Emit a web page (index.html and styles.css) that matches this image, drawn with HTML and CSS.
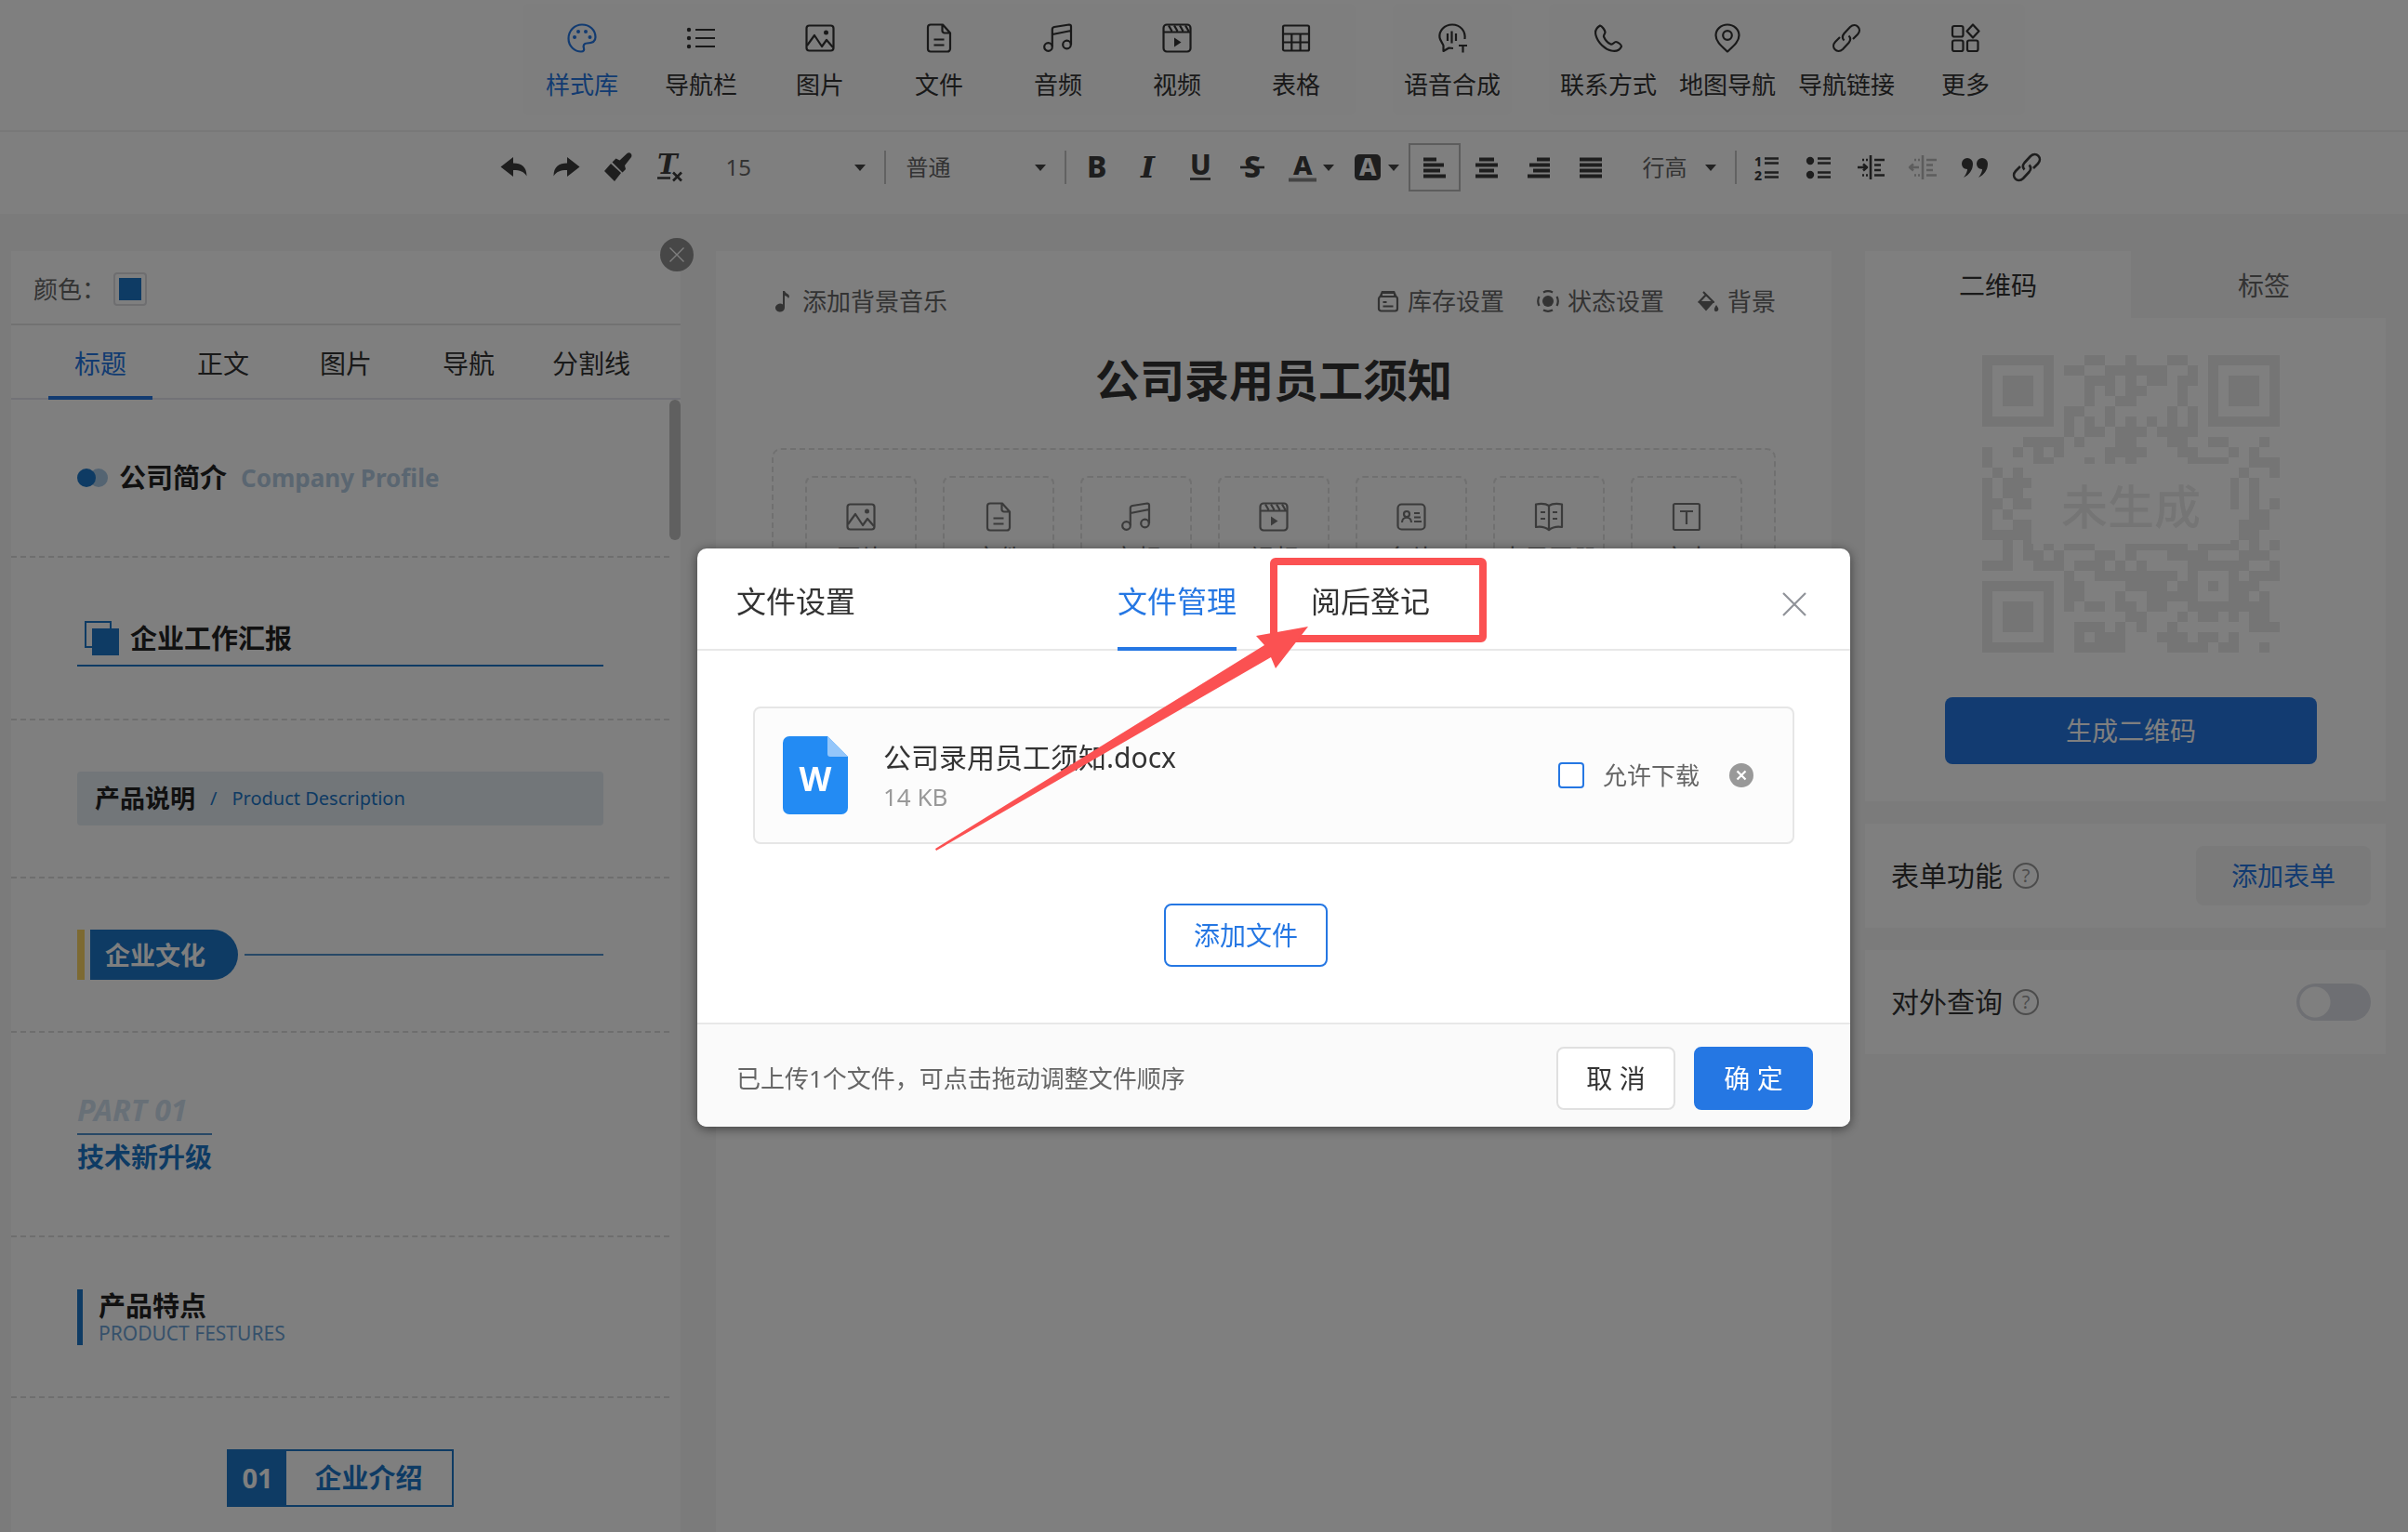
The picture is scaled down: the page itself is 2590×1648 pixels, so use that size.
FILE: index.html
```html
<!DOCTYPE html>
<html lang="zh-cn">

<head>
    <meta charset="UTF-8">
    <title>公司录用员工须知</title>
    <link rel="stylesheet" href="styles.css">
</head>

<body>
    <!-- 图标 -->
    <svg class="sprite" aria-hidden="true">
        <symbol id="i-palette" viewBox="0 0 32 32">
            <path d="M16 1.500C8 1.500 1.500 8 1.500 16.500S8.500 30.500 15 30.500c3 0 3.500-2 3-3.500-1-3 0-5.500 3.500-5.500 5 0 9-1 9-6.500C30.500 7 24 1.500 16 1.500z" />
            <g class="solid"><circle cx="8" cy="15" r="2" /><circle cx="12" cy="9" r="2" /><circle cx="20" cy="9" r="2" /><circle cx="24.500" cy="15" r="2" /></g>
        </symbol>
        <symbol id="i-list" viewBox="0 0 32 32">
            <path d="M10 7h21M10 16h21M10 25h21" />
            <g class="solid"><circle cx="3" cy="7" r="2.200" /><circle cx="3" cy="16" r="2.200" /><circle cx="3" cy="25" r="2.200" /></g>
        </symbol>
        <symbol id="i-image" viewBox="0 0 32 32">
            <rect x="1.500" y="2.500" width="29" height="27" rx="3" />
            <path d="M2 24l8-11 8 12 5-7 7 8" />
            <circle class="solid" cx="22.500" cy="10" r="2.500" />
        </symbol>
        <symbol id="i-file" viewBox="0 0 32 32">
            <path d="M7 1.500h13l8 9V27.500a3 3 0 0 1-3 3H7a3 3 0 0 1-3-3V4.500a3 3 0 0 1 3-3zM19.500 2v6a2.500 2.500 0 0 0 2.500 2.500h6M10.500 17.500h11M10.500 23.500h11" />
        </symbol>
        <symbol id="i-music" viewBox="0 0 32 32">
            <circle cx="5.500" cy="25.500" r="4.300" /><circle cx="25.500" cy="23" r="4.300" />
            <path d="M9.800 25V6.500Q9.800 4.500 12 4L28 1.500q2 0 2 2V23M10 12l20-4" />
        </symbol>
        <symbol id="i-video" viewBox="0 0 32 32">
            <rect x="1.500" y="1.500" width="29" height="29" rx="3.500" />
            <path d="M2 9.500h28M7 2.500l3.500 6M13 2.500l3.500 6M19 2.500l3.500 6M25 2.500l3.500 6" />
            <path class="solid" d="M13 15.500l7.500 5-7.500 5z" />
        </symbol>
        <symbol id="i-table" viewBox="0 0 32 32">
            <rect x="2" y="2.500" width="28" height="27" rx="1.500" />
            <path d="M2 11.500h28M2 20.500h28M11.300 11.500v18M20.600 11.500v18" />
        </symbol>
        <symbol id="i-voice" viewBox="0 0 32 32">
            <path d="M29.500 17c1-9-5-15.500-13.500-15.500S1.500 8 2.500 15.500C3 19 6 22 6.500 24v6l6-3.500 4.500.5M11 11v8M15.500 8.500v13M20 11v8M23 24h9M27.500 24v7.500" />
        </symbol>
        <symbol id="i-phone" viewBox="0 0 32 32">
            <path d="M7 2.500C3 5 1 8 2.500 13c2 8 10 15 16.500 16.500 5 1.200 9-.5 11-4.500 0-2-4-5-6-5s-3 3.500-5.500 2.500C15 21 12.500 18 11 14.500c-.5-2 1.500-3 1.500-5C12 7 9 3 7 2.500z" />
        </symbol>
        <symbol id="i-pin" viewBox="0 0 32 32">
            <path d="M16 30.500C9 24 3.500 19.500 3.500 13a12.500 11.500 0 0 1 25 0C28.500 19.500 23 24 16 30.500z" />
            <circle cx="16" cy="13" r="4.800" />
        </symbol>
        <symbol id="i-link" viewBox="0 0 32 32">
            <path d="M13.500 18.500c-2-2-2-5 0-7.500L20 4c6-5.500 13.500 2 8 8l-5 5M18.500 13.500c2 2 2 5 0 7.500L12 28c-6 5.500-13.500-2-8-8l5-5" />
        </symbol>
        <symbol id="i-more" viewBox="0 0 32 32">
            <rect x="2" y="3" width="11.500" height="11.500" rx="2" /><rect x="2" y="18.500" width="11.500" height="11.500" rx="2" />
            <rect x="18" y="18.500" width="11.500" height="11.500" rx="2" /><path d="M24 1.500l6.500 7-6.500 7-6.500-7z" />
        </symbol>
        <symbol id="i-card" viewBox="0 0 32 32">
            <rect x="1.500" y="2.500" width="29" height="27" rx="4" /><circle cx="11" cy="13" r="3" />
            <path d="M6 22c0-7 10-7 10 0M19 12h6M19 16.500h7M19 21h8" />
        </symbol>
        <symbol id="i-book" viewBox="0 0 32 32">
            <path d="M2 2.500c6-1 11-.5 14 1.500 3-2 8-2.500 14-1.500V27c-6-1-10 0-14 3-4-3-8-4-14-3zM16 4v26M7 11h5M7 18h5M20 11h5M20 18h5" />
        </symbol>
        <symbol id="i-text" viewBox="0 0 32 32">
            <rect x="2" y="2" width="28" height="28" rx="1.500" /><path d="M9 10h14M16 10v14" />
        </symbol>
        <symbol id="i-close" viewBox="0 0 32 32"><path d="M4 4l24 24M28 4L4 28" /></symbol>
        <symbol id="i-undo" viewBox="0 0 32 32">
            <path class="solid" d="M1.500 15.500L15 5v6.500c9 0 14.500 4 14.500 14-3-5-7-6.500-14.500-6.500V26z" />
        </symbol>
        <symbol id="i-brush" viewBox="0 0 32 32">
            <path class="solid" d="M1 20l7-8 11 10-7 9zM9.500 10.500l4-4 4 2 8-7.500c3-2 6 1 4.500 4l-7 9 1 4-3.500 3.500z" />
        </symbol>
        <symbol id="i-indent" viewBox="0 0 32 32">
            <path d="M16 3v26M20 8h11M20 13.500h7M20 19h7M20 24.500h11" /><path d="M2 16h9M8 12.500l4 3.500-4 3.500" />
            <path stroke-dasharray="2 2" d="M7 8h7M7 24.500h7" />
        </symbol>
        <symbol id="i-outdent" viewBox="0 0 32 32">
            <path d="M16 3v26M20 8h11M20 13.500h7M20 19h7M20 24.500h11" /><path d="M3 16h9M6 12.500L2 16l4 3.500" />
            <path stroke-dasharray="2 2" d="M7 8h7M7 24.500h7" />
        </symbol>
        <symbol id="i-quote" viewBox="0 0 32 32">
            <path class="solid" d="M2 12a6 6 0 0 1 12 0c0 7-4 12-10 15 3-4 4-7 4-9-4 0-6-3-6-6zM18 12a6 6 0 0 1 12 0c0 7-4 12-10 15 3-4 4-7 4-9-4 0-6-3-6-6z" />
        </symbol>
        <symbol id="i-note" viewBox="0 0 24 24">
            <path class="solid" d="M12 1h2c1 3 5 3 5 6l-1 2c-1-2-2-2.500-4-3v13a5 4.500 0 1 1-2-3.500z" />
        </symbol>
        <symbol id="i-stock" viewBox="0 0 24 24">
            <rect x="2" y="7" width="20" height="15.500" rx="2.500" /><path class="solid" fill-rule="evenodd" d="M5 1h14l3 7H2zM6 4v2.500h12V4z" /><path d="M6.500 13h4M6.500 17.500h11" />
        </symbol>
        <symbol id="i-state" viewBox="0 0 24 24">
            <path d="M7 2.500a11 11 0 0 1 10 0M7 21.500a11 11 0 0 0 10 0M2.500 7a11 11 0 0 0 0 10M21.500 7a11 11 0 0 1 0 10" /><circle class="solid" cx="12" cy="12" r="6" />
        </symbol>
        <symbol id="i-fill" viewBox="0 0 24 24">
            <path d="M7 2l3 3M10 5L2.500 13h15.500z" /><path class="solid" d="M1 12.500h18l-9 10zM21 16c2 3 3 4 2 6-1 1.500-3.500 1.500-4 0s0-3 2-6z" />
        </symbol>
    </svg>

    <header class="topbar">
        <nav class="group">
            <a class="tool on" href="#"><svg class="icon"><use href="#i-palette" /></svg>样式库</a>
            <a class="tool" href="#"><svg class="icon"><use href="#i-list" /></svg>导航栏</a>
            <a class="tool" href="#"><svg class="icon"><use href="#i-image" /></svg>图片</a>
            <a class="tool" href="#"><svg class="icon"><use href="#i-file" /></svg>文件</a>
            <a class="tool" href="#"><svg class="icon"><use href="#i-music" /></svg>音频</a>
            <a class="tool" href="#"><svg class="icon"><use href="#i-video" /></svg>视频</a>
            <a class="tool" href="#"><svg class="icon"><use href="#i-table" /></svg>表格</a>
        </nav>
        <nav class="group">
            <a class="tool" href="#"><svg class="icon"><use href="#i-voice" /></svg>语音合成</a>
        </nav>
        <nav class="group">
            <a class="tool" href="#"><svg class="icon"><use href="#i-phone" /></svg>联系方式</a>
            <a class="tool" href="#"><svg class="icon"><use href="#i-pin" /></svg>地图导航</a>
            <a class="tool" href="#"><svg class="icon"><use href="#i-link" /></svg>导航链接</a>
            <a class="tool" href="#"><svg class="icon"><use href="#i-more" /></svg>更多</a>
        </nav>
    </header>

    <div class="editbar">
        <button class="btn" aria-label="撤销"><svg class="icon"><use href="#i-undo" /></svg></button>
        <button class="btn" aria-label="重做"><svg class="icon flip"><use href="#i-undo" /></svg></button>
        <button class="btn" aria-label="格式刷"><svg class="icon"><use href="#i-brush" /></svg></button>
        <button class="btn" aria-label="清除格式"><svg class="icon" viewBox="0 0 32 32"><text class="serif" x="2" y="23" font-size="29">T</text><path d="M2 27.500h14M19 21.500l9 9M28 21.500l-9 9" /></svg></button>
        <div class="pick size"><select aria-label="字号"><option>15</option></select></div>
        <i class="sep"></i>
        <div class="pick weight"><select aria-label="字重"><option>普通</option></select></div>
        <i class="sep after"></i>
        <button class="btn" aria-label="加粗"><svg class="icon" viewBox="0 0 32 32"><text class="bold" x="6" y="27" font-size="32">B</text></svg></button>
        <button class="btn" aria-label="斜体"><svg class="icon" viewBox="0 0 32 32"><text class="serif" x="8" y="27" font-size="32">I</text></svg></button>
        <button class="btn" aria-label="下划线"><svg class="icon" viewBox="0 0 32 32"><text class="bold" x="5" y="24" font-size="30">U</text><path d="M5 28.500h22" /></svg></button>
        <button class="btn" aria-label="删除线"><svg class="icon" viewBox="0 0 32 32"><text class="bold" x="7" y="27" font-size="32">S</text><path d="M3 16h26" /></svg></button>
        <button class="btn color" aria-label="文字颜色"><svg class="icon" viewBox="0 0 32 32"><text class="bold" x="6" y="24" font-size="29">A</text><path class="ink" d="M1 29.500h30" /></svg></button>
        <button class="btn color" aria-label="背景颜色"><svg class="icon" viewBox="0 0 32 32"><rect class="solid" x="2" y="2" width="28" height="28" rx="5" /><text class="bold paper-ink" x="7" y="25" font-size="26">A</text></svg></button>
        <button class="btn picked" aria-label="左对齐"><svg class="icon bars" viewBox="0 0 32 32"><path d="M4 7.500h14M4 13.500h22M4 19.500h18M4 25.500h24" /></svg></button>
        <button class="btn" aria-label="居中"><svg class="icon bars" viewBox="0 0 32 32"><path d="M8 7.500h16M4 13.500h24M8 19.500h16M4 25.500h24" /></svg></button>
        <button class="btn" aria-label="右对齐"><svg class="icon bars" viewBox="0 0 32 32"><path d="M14 7.500h14M6 13.500h22M10 19.500h18M4 25.500h24" /></svg></button>
        <button class="btn" aria-label="两端对齐"><svg class="icon bars" viewBox="0 0 32 32"><path d="M4 7.500h24M4 13.500h24M4 19.500h24M4 25.500h24" /></svg></button>
        <div class="pick line"><select aria-label="行高"><option>行高</option></select></div>
        <i class="sep after"></i>
        <button class="btn" aria-label="有序列表"><svg class="icon" viewBox="0 0 32 32"><text class="bold" x="3" y="15" font-size="14">1</text><text class="bold" x="3" y="30" font-size="14">2</text><path d="M14 6.500h15M14 11.500h15M14 21.500h15M14 26.500h15" /></svg></button>
        <button class="btn" aria-label="无序列表"><svg class="icon" viewBox="0 0 32 32"><g class="solid"><circle cx="7" cy="9" r="4.200" /><circle cx="7" cy="24" r="4.200" /></g><path d="M15 6.500h14M15 11.500h14M15 21.500h14M15 26.500h14" /></svg></button>
        <button class="btn" aria-label="增加缩进"><svg class="icon"><use href="#i-indent" /></svg></button>
        <button class="btn" aria-label="减少缩进" disabled><svg class="icon"><use href="#i-outdent" /></svg></button>
        <button class="btn" aria-label="引用"><svg class="icon"><use href="#i-quote" /></svg></button>
        <button class="btn" aria-label="链接"><svg class="icon"><use href="#i-link" /></svg></button>
    </div>

    <main class="work">
        <!-- 左侧样式库 -->
        <aside class="styles">
            <button class="fold" aria-label="收起"><svg class="icon"><use href="#i-close" /></svg></button>
            <div class="pal">颜色&#xFF1A;<button class="swatch" aria-label="选择颜色"></button></div>
            <nav class="kinds">
                <a class="on" href="#">标题</a>
                <a href="#">正文</a>
                <a href="#">图片</a>
                <a href="#">导航</a>
                <a href="#">分割线</a>
            </nav>
            <div class="scroll">
                <ul class="list">
                    <li class="s1"><i class="dot"></i><i class="dot pale"></i><b>公司简介</b><b class="en">Company Profile</b></li>
                    <li class="s2">
                        <div><svg class="squares" viewBox="0 0 37 37"><rect x="1" y="1" width="27" height="27" /><rect class="front" x="8" y="8" width="29" height="29" /></svg><b>企业工作汇报</b></div>
                    </li>
                    <li class="s3">
                        <div><b>产品说明</b><span>/</span><span>Product Description</span></div>
                    </li>
                    <li class="s4"><i class="gold"></i><b>企业文化</b><i class="rule"></i></li>
                    <li class="s5">
                        <div><em>PART 01</em><b>技术新升级</b></div>
                    </li>
                    <li class="s6">
                        <div><b>产品特点</b><span>PRODUCT FESTURES</span></div>
                    </li>
                    <li class="s7">
                        <div><b class="num">01</b><b>企业介绍</b></div>
                    </li>
                </ul>
                <i class="thumb"></i>
            </div>
        </aside>

        <!-- 编辑区 -->
        <section class="paper">
            <div class="acts">
                <a class="music" href="#"><svg class="icon"><use href="#i-note" /></svg>添加背景音乐</a>
                <a href="#"><svg class="icon"><use href="#i-stock" /></svg>库存设置</a>
                <a href="#"><svg class="icon"><use href="#i-state" /></svg>状态设置</a>
                <a href="#"><svg class="icon"><use href="#i-fill" /></svg>背景</a>
            </div>
            <h1>公司录用员工须知</h1>
            <div class="drop">
                <button><svg class="icon"><use href="#i-image" /></svg>图片</button>
                <button><svg class="icon"><use href="#i-file" /></svg>文件</button>
                <button><svg class="icon"><use href="#i-music" /></svg>音频</button>
                <button><svg class="icon"><use href="#i-video" /></svg>视频</button>
                <button><svg class="icon"><use href="#i-card" /></svg>名片</button>
                <button><svg class="icon"><use href="#i-book" /></svg>电子画册</button>
                <button><svg class="icon"><use href="#i-text" /></svg>文本</button>
            </div>
        </section>

        <!-- 右侧设置 -->
        <aside class="side">
            <div class="qrbox">
                <nav class="qrtabs"><a class="on" href="#">二维码</a><a href="#">标签</a></nav>
                <div class="qr">
                    <svg viewBox="0 0 29 29" shape-rendering="crispEdges">
                        <path d="M.5 .5h6v6h-6zM22.500 .5h6v6h-6zM.5 22.500h6v6h-6z" />
                        <path d="M2 3.500h3M24 3.500h3M2 25.500h3" stroke-width="3" />
                        <path d="M10 .5h2M14 .5h1M18 .5h2M8 1.500h2M12 1.500h6M20 1.500h1M10 2.500h3M14 2.500h1M16 2.500h2M19 2.500h2M10 3.500h1M12 3.500h1M14 3.500h2M19 3.500h1M10 4.500h1M13 4.500h2M19 4.500h1M8 5.500h2M12 5.500h1M18 5.500h1M20 5.500h1M8 6.500h1M10 6.500h1M12 6.500h1M14 6.500h1M16 6.500h1M18 6.500h1M20 6.500h1M8 7.500h1M10 7.500h2M13 7.500h3M17 7.500h4" />
                        <path d="M4 8.500h4M9 8.500h1M13 8.500h2M18 8.500h2M22 8.500h2M27 8.500h1M0 9.500h1M3 9.500h1M5 9.500h1M7 9.500h1M12 9.500h4M19 9.500h2M24 9.500h1M26 9.500h1M0 10.500h1M5 10.500h2M10 10.500h1M12 10.500h1M14 10.500h1M20 10.500h4M26 10.500h3M1 11.500h1M3 11.500h1M25 11.500h1M28 11.500h1M0 12.500h1M2 12.500h3M24 12.500h1M26 12.500h1M0 13.500h1M2 13.500h2M24 13.500h1M26 13.500h1M0 14.500h2M3 14.500h2M24 14.500h1M26 14.500h1M28 14.500h1M0 15.500h1M2 15.500h1M26 15.500h2M0 16.500h1M3 16.500h2M25 16.500h3M0 17.500h5M25 17.500h2" />
                        <path d="M2 18.500h1M4 18.500h1M6 18.500h1M8 18.500h3M14 18.500h6M21 18.500h4M26 18.500h1M28 18.500h1M2 19.500h1M4 19.500h2M7 19.500h1M11 19.500h2M14 19.500h1M18 19.500h4M25 19.500h3M0 20.500h3M5 20.500h3M9 20.500h3M13 20.500h1M15 20.500h1M20 20.500h6M28 20.500h1M8 21.500h1M11 21.500h8M20 21.500h1M24 21.500h1M26 21.500h3M8 22.500h2M14 22.500h4M19 22.500h2M22 22.500h1M24 22.500h3M8 23.500h2M13 23.500h1M16 23.500h5M24 23.500h2M27 23.500h1M8 24.500h1M10 24.500h2M13 24.500h2M16 24.500h2M20 24.500h8M14 25.500h2M19 25.500h1M21 25.500h2M24 25.500h1M26 25.500h2M9 26.500h3M13 26.500h1M15 26.500h1M18 26.500h1M26 26.500h3M9 27.500h1M11 27.500h3M17 27.500h3M21 27.500h2M24 27.500h1M9 28.500h5M18 28.500h4M23 28.500h2M27 28.500h1" />
                        <rect x="4.830" y="10.600" width="19.340" height="7.800" />
                    </svg>
                    <span>未生成</span>
                </div>
                <button class="make">生成二维码</button>
            </div>
            <div class="row">表单功能<i class="help">?</i><button class="add">添加表单</button></div>
            <div class="row"><label for="query">对外查询</label><i class="help">?</i><input class="switch" type="checkbox" id="query"></div>
        </aside>
    </main>

    <div class="mask">
        <div class="modal" role="dialog" aria-labelledby="mt">
            <header>
                <h2 id="mt">文件设置</h2>
                <nav><a class="on" href="#">文件管理</a><a href="#">阅后登记</a></nav>
                <button class="x" aria-label="关闭"><svg class="icon"><use href="#i-close" /></svg></button>
            </header>
            <div class="body">
                <div class="file">
                    <svg class="doc" viewBox="0 0 70 84">
                        <path fill="#238bf3" d="M7 0h41l22 22v55a7 7 0 0 1-7 7H7a7 7 0 0 1-7-7V7a7 7 0 0 1 7-7z" />
                        <path fill="#94c6fa" d="M48 0l22 22H51a3 3 0 0 1-3-3z" />
                        <text x="35" y="59" text-anchor="middle">W</text>
                    </svg>
                    <div class="name">公司录用员工须知.docx<small>14 KB</small></div>
                    <label class="allow"><input type="checkbox">允许下载</label>
                    <button class="del" aria-label="删除"><svg class="icon"><use href="#i-close" /></svg></button>
                </div>
                <button class="more">添加文件</button>
            </div>
            <footer>
                <p>已上传1个文件&#xFF0C;可点击拖动调整文件顺序</p>
                <button>取 消</button>
                <button class="ok">确 定</button>
            </footer>
            <!-- 标注:红框和箭头 -->
            <svg class="mark" viewBox="0 0 600 320">
                <rect x="368" y="4" width="225" height="83" rx="2" />
                <path d="M4 313L358 94l-9-10 56-10-35 45-5-12L5 315z" />
            </svg>
        </div>
    </div>
</body>

</html>
```

FILE: styles.css
```css
* {
    box-sizing: border-box;
}

body {
    margin: 0;
    height: 100vh;
    overflow: hidden;
    display: flex;
    flex-direction: column;
    background: #f6f6f6;
    color: #333;
    font: 26px/36px "Noto Sans", "Noto Sans CJK SC", sans-serif;
}

a {
    color: inherit;
    text-decoration: none;
}

button,
select {
    margin: 0;
    padding: 0;
    border: 0;
    background: none;
    color: inherit;
    font: inherit;
}

i {
    font-style: normal;
}

.sprite {
    display: none;
}

.icon {
    width: 32px;
    height: 32px;
    flex: none;
    overflow: visible;
    fill: none;
    stroke: currentColor;
    stroke-width: 2.2;
    stroke-linejoin: round;
}

.icon text,
.solid {
    fill: currentColor;
    stroke: none;
}

/* 顶部 */
.topbar {
    display: flex;
    justify-content: center;
    gap: 40px;
    padding: 4px 0 16px 150px;
    background: #fff;
    border-bottom: 2px solid #f0f0f0;
}

.group {
    display: flex;
    background: #fcfcfc;
    border-radius: 6px;
}

.tool {
    width: 128px;
    height: 120px;
    padding-top: 21px;
    display: flex;
    flex-direction: column;
    align-items: center;
    gap: 16px;
}

.on {
    color: #2577e3;
}

/* 编辑工具条 */
.editbar {
    height: 88px;
    padding: 0 8px 12px 150px;
    display: flex;
    flex: none;
    align-items: center;
    justify-content: center;
    background: #fff;
    font-size: 24px;
}

.btn {
    width: 56px;
    height: 52px;
    display: flex;
    align-items: center;
    justify-content: center;
    color: #3c3c3c;
}

.btn .icon {
    stroke-width: 2.6;
}

.btn:disabled {
    color: #bbb;
}

.btn .bars {
    stroke-width: 4;
}

.btn.picked {
    border: 2px solid #bbb;
}

.flip {
    transform: scaleX(-1);
}

.color {
    width: 70px;
    gap: 6px;
}

.color::after,
.pick::after {
    content: "";
    border: 6px solid transparent;
    border-top: 7px solid #444;
    border-bottom: 0;
}

.bold {
    font-weight: 800;
}

.serif {
    font-family: "DejaVu Serif", serif;
    font-weight: bold;
    font-style: italic;
}

.icon .ink {
    stroke: #888;
    stroke-width: 4;
}

.icon .paper-ink {
    fill: #fff;
}

.pick {
    display: flex;
    align-items: center;
    padding-right: 20px;
    color: #666;
}

.pick select {
    flex: 1;
    min-width: 0;
    appearance: none;
}

.size {
    width: 202px;
    padding-left: 32px;
}

.weight {
    width: 192px;
    padding-left: 22px;
}

.line {
    width: 127px;
    padding-left: 28px;
}

.sep {
    width: 2px;
    height: 36px;
    background: #c4c4c4;
}

.sep.after {
    margin-right: 4px;
}

/* 三栏 */
.work {
    flex: 1;
    min-height: 0;
    display: grid;
    grid-template-columns: 720px 1fr 560px;
    padding: 40px 24px 0 12px;
}

.styles {
    position: relative;
    min-height: 0;
    display: flex;
    flex-direction: column;
    background: #fff;
}

.fold {
    position: absolute;
    top: -14px;
    right: -14px;
    width: 36px;
    height: 36px;
    display: grid;
    place-items: center;
    border-radius: 50%;
    background: #8e8e8e;
    color: #fff;
}

.fold .icon {
    width: 20px;
    height: 20px;
}

.pal {
    height: 80px;
    padding: 4px 0 0 24px;
    display: flex;
    flex: none;
    align-items: center;
    gap: 8px;
    color: #666;
    border-bottom: 2px solid #e4e4e4;
}

.swatch {
    width: 36px;
    height: 36px;
    padding: 4px;
    border: 2px solid #dcdce0;
    border-radius: 4px;
    background: #1d77c8 content-box;
}

.kinds {
    height: 80px;
    padding-left: 40px;
    display: flex;
    flex: none;
    gap: 20px;
    border-bottom: 2px solid #e4e4ee;
    font-size: 28px;
    line-height: 82px;
}

.kinds a {
    width: 112px;
    height: 80px;
    text-align: center;
}

.kinds .on {
    border-bottom: 4px solid #2577e3;
}

.scroll {
    display: flex;
    min-height: 0;
}

.thumb {
    width: 12px;
    height: 151px;
    border-radius: 6px;
    background: #c0c0c0;
}

.list {
    flex: 1;
    margin: 0;
    padding: 0;
    list-style: none;
    font-size: 29px;
    line-height: 40px;
}

.list li {
    height: 170px;
    padding: 0 71px;
    display: flex;
    align-items: center;
    border-bottom: 2px dashed #ddd;
}

.list b {
    color: #222;
}

.list .s2 {
    height: 175px;
}

.list .s4 {
    height: 166px;
}

.list .s5 {
    height: 220px;
}

.list .s6 {
    height: 173px;
}

.list .s7 {
    height: 174px;
    justify-content: center;
}

.dot {
    width: 20px;
    height: 20px;
    border-radius: 50%;
    background: #1d77c8;
    z-index: 1;
}

.dot.pale {
    margin: 0 12px 0 -7px;
    background: #a9c8e4;
    z-index: 0;
}

.list .en {
    margin-left: 15px;
    color: #b4cce2;
    font-size: 26px;
}

.s2 div {
    flex: 1;
    padding: 10px 0 8px 8px;
    display: flex;
    align-items: center;
    gap: 12px;
    border-bottom: 2px solid #1d77c8;
}

.squares {
    width: 37px;
    height: 37px;
    fill: none;
    stroke: #1d77c8;
    stroke-width: 2;
}

.front {
    fill: #1d77c8;
    stroke: none;
}

.s3 div {
    flex: 1;
    height: 58px;
    padding-left: 19px;
    display: flex;
    align-items: center;
    gap: 16px;
    border-radius: 4px;
    background: #e4ecf3;
    color: #1d77c8;
    font-size: 20px;
}

.s3 b,
.s4 b {
    font-size: 27px;
}

.gold {
    width: 8px;
    height: 54px;
    margin-right: 6px;
    background: #fbd565;
}

.list .s4 b {
    height: 54px;
    padding: 0 35px 0 16px;
    border-radius: 0 27px 27px 0;
    background: #1d77c8;
    color: #fff;
    line-height: 56px;
}

.rule {
    flex: 1;
    height: 2px;
    margin-left: 7px;
    background: #5191cd;
}

.s5 div,
.s6 div {
    display: flex;
    flex-direction: column;
}

.s5 div {
    padding-bottom: 6px;
}

.s5 em {
    border-bottom: 2px solid #5191cd;
    color: #d0e0ef;
    font-size: 32px;
    font-weight: bold;
    line-height: 50px;
}

.list .s5 b {
    margin-top: 4px;
    color: #1d77c8;
}

.s6 div {
    height: 60px;
    padding-left: 17px;
    border-left: 6px solid #1d77c8;
}

.s6 b {
    line-height: 36px;
}

.s6 span {
    color: #6da3d6;
    font-size: 21px;
    line-height: 22px;
}

.s7 div {
    display: flex;
    border: 2px solid #1d77c8;
    line-height: 58px;
}

.list .s7 b {
    padding: 0 31px;
    color: #1d77c8;
}

.list .s7 .num {
    padding: 0 14px;
    background: #1d77c8;
    color: #fff;
}

/* 编辑区 */
.paper {
    margin: 0 36px 0 38px;
    padding: 36px 60px;
    background: #fff;
}

.acts {
    display: flex;
    gap: 35px;
    color: #666;
}

.acts a {
    display: flex;
    align-items: center;
    gap: 9px;
}

.acts .icon {
    width: 24px;
    height: 24px;
}

.acts .music {
    margin-right: auto;
}

.paper h1 {
    margin: 22px 0 28px;
    font-size: 48px;
    line-height: 90px;
    text-align: center;
}

.drop {
    height: 240px;
    padding: 28px 34px;
    display: flex;
    justify-content: space-between;
    border: 2px dashed #e0e0e0;
    border-radius: 10px;
    background: #fcfcfc;
}

.drop button {
    width: 120px;
    height: 120px;
    padding-top: 26px;
    display: flex;
    flex-direction: column;
    align-items: center;
    gap: 10px;
    border: 2px dashed #e0e0e0;
    border-radius: 8px;
    color: #777;
    white-space: nowrap;
}

/* 右侧 */
.side {
    display: flex;
    flex-direction: column;
    gap: 24px;
    font-size: 28px;
}

.qrbox {
    padding-bottom: 40px;
    display: flex;
    flex-direction: column;
    align-items: center;
    gap: 40px;
    background: #fff;
}

.qrtabs {
    align-self: stretch;
    display: flex;
    line-height: 74px;
    height: 72px;
    text-align: center;
    color: #666;
}

.qrtabs a {
    width: 274px;
    padding-left: 12px;
    background: #f7f7f7;
}

.qrtabs .on {
    width: 286px;
    padding: 0;
    background: #fff;
    color: #333;
}

.qr {
    width: 320px;
    height: 320px;
    margin: 0 0 8px 12px;
    display: grid;
    place-items: center;
    color: #eaeaea;
    font: 500 50px/60px "Noto Sans CJK SC", sans-serif;
}

.qr svg,
.qr span {
    grid-area: 1 / 1;
}

.qr svg {
    width: 320px;
    height: 320px;
    fill: none;
    stroke: #eaeaea;
}

.qr rect {
    fill: #fff;
    stroke: none;
}

.make {
    width: 400px;
    height: 72px;
    margin-left: 12px;
    border-radius: 8px;
    background: #2577e3;
    color: #fff;
}

.row {
    height: 112px;
    padding: 0 16px 0 28px;
    display: flex;
    align-items: center;
    background: #fff;
    font-size: 30px;
}

.help {
    width: 28px;
    height: 28px;
    margin: 0 auto 0 11px;
    border: 2px solid #999;
    border-radius: 50%;
    color: #999;
    font-size: 20px;
    line-height: 24px;
    text-align: center;
}

.add {
    width: 188px;
    height: 64px;
    border-radius: 8px;
    background: #f5f5f5;
    color: #2577e3;
    font-size: 28px;
}

.switch {
    appearance: none;
    width: 80px;
    height: 40px;
    margin: 0;
    border-radius: 20px;
    background: radial-gradient(circle at 20px 20px, #fff 16px, #dcdee6 17px);
}

/* 弹窗 */
.mask {
    position: fixed;
    inset: 0;
    padding: 590px 0 0 150px;
    background: rgba(0, 0, 0, 0.5);
    z-index: 9;
}

.modal {
    position: relative;
    width: 1240px;
    margin: 0 auto;
    border-radius: 10px;
    background: #fff;
    box-shadow: 0 2px 12px rgba(0, 0, 0, 0.5);
    font-size: 28px;
}

.modal header {
    height: 110px;
    padding: 0 44px 0 42px;
    display: flex;
    border-bottom: 2px solid #e8e8e8;
    font-size: 32px;
    line-height: 114px;
}

.modal h2 {
    margin: 0;
    font-size: 32px;
    font-weight: normal;
}

.modal nav {
    margin-left: 282px;
    display: flex;
    gap: 80px;
}

.modal nav a {
    height: 110px;
}

.modal nav .on {
    border-bottom: 4px solid #2577e3;
}

.x {
    margin-left: auto;
    display: flex;
    align-items: center;
    color: #909399;
}

.x .icon {
    margin-top: 12px;
}

.body {
    height: 400px;
    padding: 60px;
}

.file {
    height: 148px;
    padding: 0 42px 0 30px;
    display: flex;
    align-items: center;
    border: 2px solid #e6e6e6;
    border-radius: 8px;
    background: #fcfcfc;
}

.doc {
    width: 70px;
    height: 84px;
    margin-right: 38px;
}

.doc text {
    fill: #fff;
    font-size: 36px;
    font-weight: bold;
}

.name {
    padding-top: 4px;
    font-size: 30px;
    line-height: 42px;
}

.name small {
    display: block;
    color: #999;
    font-size: 26px;
}

.allow {
    margin: 0 32px 0 auto;
    display: flex;
    align-items: center;
    color: #666;
    font-size: 26px;
}

.allow input {
    appearance: none;
    width: 28px;
    height: 28px;
    margin: 0 20px 0 0;
    border: 2px solid #2577e3;
    border-radius: 4px;
    background: #fff;
}

.del {
    width: 26px;
    height: 26px;
    display: grid;
    place-items: center;
    border-radius: 50%;
    background: #999;
    color: #fff;
}

.del .icon {
    width: 12px;
    height: 12px;
    stroke-width: 6;
}

.more {
    width: 176px;
    height: 68px;
    margin: 64px auto 0 442px;
    border: 2px solid #2577e3;
    border-radius: 8px;
    color: #2577e3;
}

.modal footer {
    height: 112px;
    padding: 6px 40px 0 42px;
    display: flex;
    align-items: center;
    gap: 20px;
    border-top: 2px solid #e8e8e8;
    border-radius: 0 0 10px 10px;
    background: #fafafa;
}

.modal p {
    margin: 0 auto 0 0;
    color: #666;
    font-size: 26px;
}

.modal footer button {
    width: 128px;
    height: 68px;
    border: 2px solid #e0e0e0;
    border-radius: 8px;
    background: #fff;
}

.modal footer .ok {
    border-color: #2577e3;
    background: #2577e3;
    color: #fff;
}

.mark {
    position: absolute;
    left: 252px;
    top: 10px;
    width: 600px;
    height: 320px;
    pointer-events: none;
}

.mark rect {
    fill: none;
    stroke: #fb5152;
    stroke-width: 8;
}

.mark path {
    fill: #fb5152;
}
```
